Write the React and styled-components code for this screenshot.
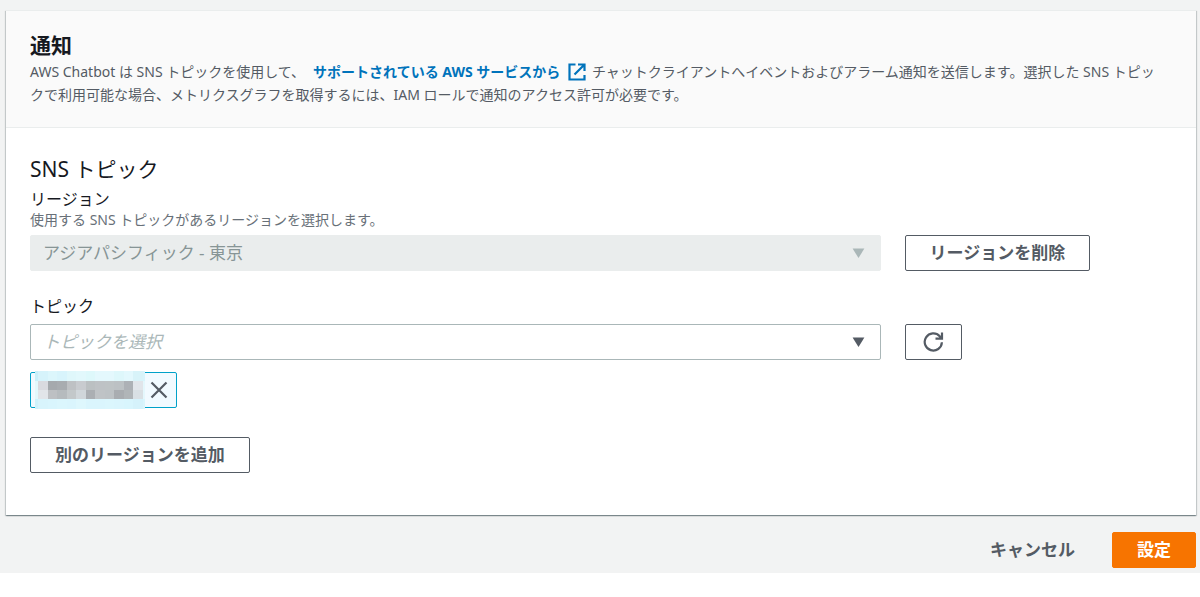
import React from "react";
import styled, { createGlobalStyle } from "styled-components";

const GlobalStyle = createGlobalStyle`
  *, *::before, *::after { box-sizing: border-box; }
  body {
    margin: 0;
    background: #fff;
    color: #16191f;
    font-family: "Noto Sans", "Noto Sans CJK JP", sans-serif;
    font-size: 14px;
    line-height: 22px;
  }
  button, select { font-family: inherit; }
`;

const Page = styled.main`
  background: #f2f3f3;
  padding: 10px 4px 5px 6px;
`;

const Card = styled.section`
  background: #fff;
  border-top: 1px solid #eaeded;
  box-shadow: 0 1px 1px 0 rgba(0, 28, 36, 0.3), 1px 1px 1px 0 rgba(0, 28, 36, 0.15),
    -1px 1px 1px 0 rgba(0, 28, 36, 0.15);
`;

const CardHeader = styled.header`
  padding: 19px 24px 21px;
  background: #fafafa;
  border-bottom: 1px solid #eaeded;
`;

const Title = styled.h2`
  margin: 0;
  font-size: 21px;
  line-height: 30px;
  font-weight: 700;
`;

const Lead = styled.p`
  margin: 0;
  padding-right: 8px;
  color: #545b64;
  line-height: 23px;
`;

const ExternalLink = styled.a`
  margin: 0 6px 0 8px;
  color: #0073bb;
  font-weight: 700;
  text-decoration: none;

  svg {
    margin-left: 4px;
    vertical-align: -4px;
  }
`;

const CardBody = styled.div`
  padding: 23px 24px 42px;
`;

const SectionTitle = styled.h3`
  margin: 0;
  font-size: 21px;
  line-height: 36px;
  font-weight: 400;
`;

const Field = styled.div`
  margin-bottom: ${(p) => (p.$last ? "29px" : "23px")};
`;

const Label = styled.label`
  display: block;
  font-size: 16px;
  line-height: 24px;
  margin-bottom: ${(p) => (p.$spaced ? "6px" : "0")};
`;

const Hint = styled.p`
  margin: 0 0 6px;
  color: #687078;
  line-height: 18px;
`;

const Row = styled.div`
  display: grid;
  grid-template-columns: repeat(12, 1fr);
  column-gap: 24px;
`;

const SelectBox = styled.div`
  grid-column: span 9;
  display: grid;
  align-items: center;

  > * { grid-area: 1 / 1; }
  svg {
    justify-self: end;
    margin-right: 16px;
    pointer-events: none;
    fill: ${(p) => (p.$disabled ? "#aab7b8" : "#545b64")};
  }
`;

const Select = styled.select`
  appearance: none;
  width: 100%;
  height: 36px;
  padding: 0 40px 2px 12px;
  border: 1px solid #aab7b8;
  border-radius: 2px;
  background: #fff;
  color: #aab7b8;
  font-size: 17px;
  font-style: italic;

  &:disabled {
    opacity: 1;
    border-color: #eaeded;
    background: #eaeded;
    color: #879596;
    font-style: normal;
  }
`;

const ButtonCell = styled.div`
  grid-column: span 3;
`;

const Button = styled.button`
  display: inline-flex;
  align-items: center;
  justify-content: center;
  height: 36px;
  padding: 0 ${(p) => (p.$icon ? "17px" : "24px")};
  border: 1px solid #545b64;
  border-radius: 2px;
  background: #fff;
  color: #545b64;
  font-size: 17px;
  line-height: 24px;
  font-weight: 700;
  white-space: nowrap;
  cursor: pointer;
`;

const PrimaryButton = styled(Button)`
  border-color: #f77400;
  background: #f77400;
  color: #fff;
`;

const LinkButton = styled(Button)`
  border-color: transparent;
  background: transparent;
`;

const Token = styled.div`
  display: flex;
  align-items: center;
  width: fit-content;
  height: 36px;
  margin-top: 12px;
  padding: 0 8px 0 4px;
  border: 1px solid #00a1c9;
  border-radius: 2px;
  background: #f1faff;

  > svg { flex: none; }
`;

const TokenClose = styled.button`
  display: flex;
  padding: 0;
  margin-left: 5px;
  border: 0;
  background: none;
  cursor: pointer;
`;

const Footer = styled.footer`
  display: flex;
  justify-content: flex-end;
  gap: 12px;
  padding-top: 17px;
`;

const ExternalIcon = () => (
  <svg width="18" height="18" viewBox="0 0 18 18" fill="none" stroke="#0073bb" strokeWidth="2.200" aria-hidden="true">
    <path d="M7.500 1.500H1.500v15h15v-4.500M10 1.500h6.500v6.500M16 2 6.500 11.500" />
  </svg>
);

const Caret = () => (
  <svg width="13" height="11" viewBox="0 0 13 11" aria-hidden="true">
    <path d="M.6.500h11.800L6.500 10Z" />
  </svg>
);

const RefreshIcon = () => (
  <svg width="21" height="22" viewBox="0 0 21 22" fill="none" stroke="#545b64" strokeWidth="2.200" aria-hidden="true">
    <path d="M18.900 11.300a8.600 8.600 0 1 1-2.200-6.100l2 2.200M19 1.500v6.200h-6.500" />
  </svg>
);

const CloseIcon = () => (
  <svg width="18" height="18" viewBox="0 0 18 18" fill="none" stroke="#545b64" strokeWidth="2.200" aria-hidden="true">
    <path d="M1.500 1.500 16.500 16.500M16.500 1.500 1.500 16.500" />
  </svg>
);

const mosaicEdges = [0, 10, 38, 67, 96, 124, 153, 181, 210, 238, 267, 296, 324, 331];
const mosaicRows = [
  ["#c9eff9", "#d6f3fb", "#dcf6fc", "#d8f4fc", "#dff7fb", "#e2f8fc", "#def8fb", "#e4f8fd", "#e4f8fd", "#def7fb", "#e3f8fd", "#d8f3f9", "#d8f4fb"],
  ["#e3f8fc", "#d9dadf", "#a5a9ad", "#a8acb0", "#bec1c4", "#c8cbcf", "#bbc0c2", "#bec2c5", "#bec3c5", "#bcc1c4", "#adb1b6", "#e1e5ea", "#e4f7fc"],
  ["#e3f8fc", "#e1e5e9", "#bdc0c3", "#b6bbbe", "#c3c8ca", "#d0d6da", "#abafb3", "#bfc3c6", "#bdc2c5", "#a9adb1", "#b0b5b8", "#d9e0e4", "#e4f7fc"],
  ["#cff2fb", "#d8f4fc", "#d9f5fd", "#dbf6fd", "#daf5fd", "#def7fd", "#daf5fd", "#daf5fd", "#dbf6fd", "#daf5fd", "#d8f5fd", "#d5f2fb", "#d9f5fc"],
];

const RedactedName = () => (
  <svg width="110" height="38" viewBox="0 0 331 114" shapeRendering="crispEdges" role="img" aria-label="トピック名">
    {mosaicRows.map((row, y) =>
      row.map((fill, x) => (
        <rect
          key={`${x}-${y}`}
          x={mosaicEdges[x]}
          y={y * 28.5}
          width={mosaicEdges[x + 1] - mosaicEdges[x]}
          height={28.5}
          fill={fill}
        />
      ))
    )}
  </svg>
);

export default function App() {
  return (
    <>
      <GlobalStyle />
      <Page>
        <Card>
          <CardHeader>
            <Title>通知</Title>
            <Lead>
              AWS Chatbot は SNS トピックを使用して、
              <ExternalLink href="#services">
                サポートされている AWS サービスから <ExternalIcon />
              </ExternalLink>
              チャットクライアントへイベントおよびアラーム通知を送信します。選択した SNS トピックで利用可能な場合、メトリクスグラフを取得するには、IAM ロールで通知のアクセス許可が必要です。
            </Lead>
          </CardHeader>
          <CardBody>
            <SectionTitle>SNS トピック</SectionTitle>
            <Field>
              <Label htmlFor="region">リージョン</Label>
              <Hint id="region-hint">使用する SNS トピックがあるリージョンを選択します。</Hint>
              <Row>
                <SelectBox $disabled>
                  <Select id="region" aria-describedby="region-hint" disabled>
                    <option>アジアパシフィック - 東京</option>
                  </Select>
                  <Caret />
                </SelectBox>
                <ButtonCell>
                  <Button type="button">リージョンを削除</Button>
                </ButtonCell>
              </Row>
            </Field>
            <Field $last>
              <Label htmlFor="topic" $spaced>トピック</Label>
              <Row>
                <SelectBox>
                  <Select id="topic">
                    <option>トピックを選択</option>
                  </Select>
                  <Caret />
                </SelectBox>
                <ButtonCell>
                  <Button type="button" $icon aria-label="更新">
                    <RefreshIcon />
                  </Button>
                </ButtonCell>
              </Row>
              <Token>
                <RedactedName />
                <TokenClose type="button" aria-label="削除">
                  <CloseIcon />
                </TokenClose>
              </Token>
            </Field>
            <Button type="button">別のリージョンを追加</Button>
          </CardBody>
        </Card>
        <Footer>
          <LinkButton type="button">キャンセル</LinkButton>
          <PrimaryButton type="button">設定</PrimaryButton>
        </Footer>
      </Page>
    </>
  );
}
